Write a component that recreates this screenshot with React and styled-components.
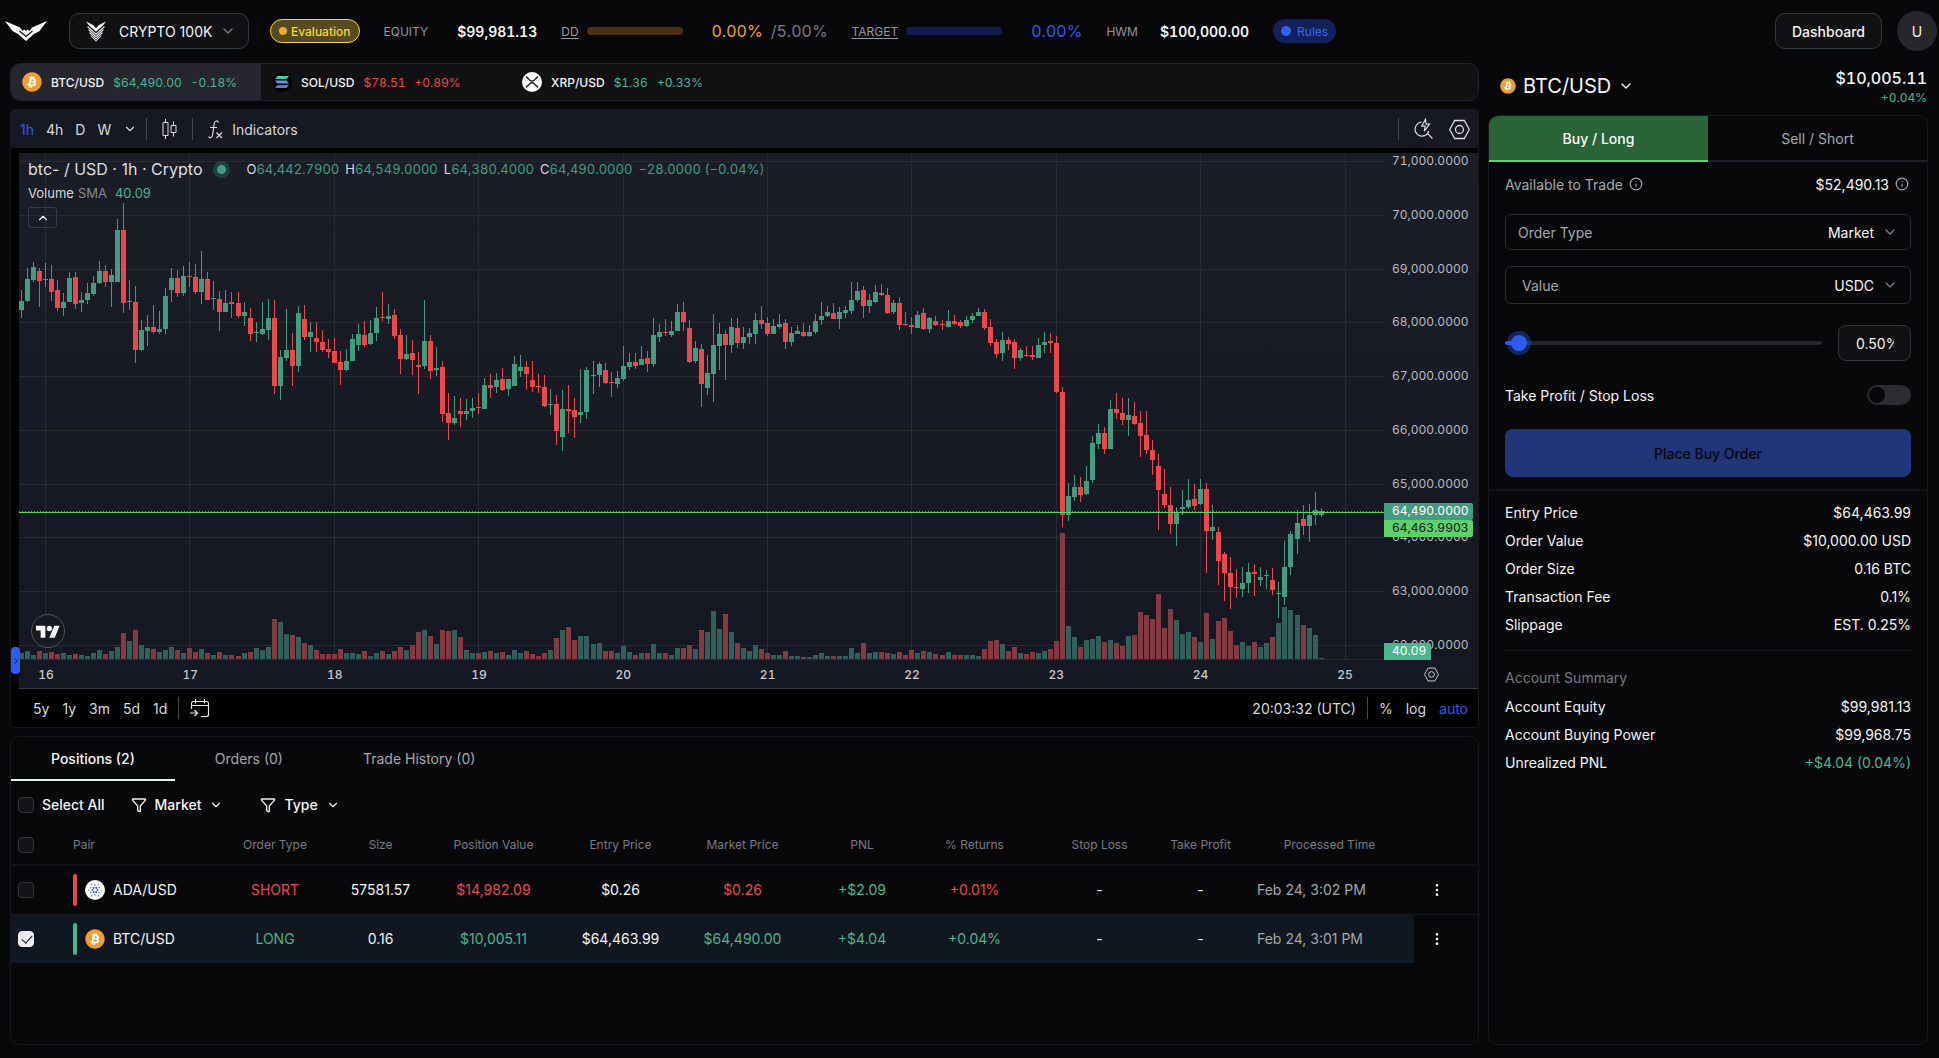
import React from "react";
import styled, { createGlobalStyle, css } from "styled-components";
import {
  ChevronDown,
  ChevronUp,
  ChevronRight,
  EllipsisVertical,
  Funnel,
  Info,
} from "lucide-react";
import { FaBitcoin } from "react-icons/fa";

const colors = {
  page: "#08080a",
  panel: "#111113",
  line: "#17181c",
  lineStrong: "#2a2c33",
  text: "#f4f4f5",
  soft: "#a5a7ad",
  muted: "#777a82",
  blue: "#2f5bea",
  up: "#4bb58f",
  down: "#e9484f",
  candleUp: "#459b80",
  lime: "#5dd26b",
};

const GlobalStyle = createGlobalStyle`
  * {
    box-sizing: border-box;
  }

  body {
    margin: 0;
    background: ${colors.page};
    color: ${colors.text};
    font-family: Inter, "Liberation Sans", sans-serif;
    font-size: 14px;
  }

  button, input, select {
    margin: 0;
    padding: 0;
    border: 0;
    background: none;
    color: inherit;
    font: inherit;
  }

  button, select {
    cursor: pointer;
  }

  select {
    appearance: none;
    outline: none;
  }

  svg {
    display: block;
    flex: none;
  }
`;

/* ---------- chart data ---------- */

// Each bar: [direction, high, body top, body bottom, low, volume].
// Prices are ticks down from the segment's own base line, three to a pixel.
const SEGMENTS = [
  {
    base: -3,
    bars: [
      ["u", 420, 453, 480, 505, 19], ["u", 353, 387, 453, 455, 25], ["u", 336, 351, 390, 396, 13],
      ["d", 355, 363, 392, 471, 24], ["u", 340, 386, 389, 411, 19], ["d", 345, 387, 426, 452, 21],
      ["d", 390, 420, 473, 484, 16], ["u", 430, 456, 473, 498, 19], ["u", 367, 384, 456, 457, 13],
      ["d", 366, 381, 462, 476, 16], ["u", 426, 450, 459, 487, 12], ["u", 399, 429, 450, 462, 10],
      ["u", 378, 399, 432, 437, 19], ["u", 333, 363, 399, 402, 28], ["d", 345, 363, 396, 410, 16],
      ["u", 357, 375, 396, 471, 25], ["u", 207, 240, 396, 396, 36], ["d", 160, 240, 459, 488, 79],
      ["u", 390, 453, 456, 480, 55], ["d", 408, 456, 600, 638, 88], ["u", 511, 541, 600, 604, 43],
      ["u", 495, 531, 543, 587, 33], ["d", 466, 531, 547, 551, 31], ["u", 484, 537, 546, 551, 22],
      ["u", 414, 438, 537, 551, 28], ["u", 353, 384, 420, 456, 36], ["d", 360, 384, 429, 440, 28],
      ["u", 347, 378, 429, 437, 19], ["d", 337, 378, 381, 410, 34], ["d", 342, 381, 426, 431, 22],
      ["u", 303, 387, 426, 461, 31], ["d", 366, 387, 450, 450, 19], ["u", 393, 444, 447, 480, 13],
      ["d", 424, 447, 486, 542, 21], ["u", 420, 459, 486, 486, 12], ["d", 427, 456, 461, 503, 11],
      ["d", 427, 459, 497, 503, 9], ["u", 456, 486, 497, 528, 19], ["d", 475, 504, 552, 573, 22],
      ["u", 517, 546, 549, 575, 34], ["u", 457, 537, 552, 554, 28], ["u", 447, 504, 541, 569, 36],
      ["d", 450, 504, 708, 731, 119], ["u", 599, 621, 708, 749, 110], ["u", 478, 600, 624, 632, 76],
      ["d", 550, 600, 648, 707, 73], ["u", 468, 489, 648, 667, 66], ["d", 465, 507, 560, 569, 49],
      ["u", 516, 545, 560, 607, 43], ["d", 517, 565, 577, 606, 28], ["d", 541, 576, 600, 605, 15],
      ["d", 567, 597, 606, 624, 16], ["d", 565, 603, 639, 640, 16], ["d", 604, 636, 660, 705, 31],
      ["u", 598, 632, 659, 662, 19], ["u", 553, 567, 633, 634, 19], ["u", 523, 552, 586, 604, 16],
      ["d", 514, 555, 584, 590, 25], ["u", 510, 549, 582, 585, 10], ["u", 471, 504, 549, 572, 19],
      ["d", 427, 501, 504, 514, 25], ["u", 462, 499, 507, 522, 16], ["d", 478, 495, 558, 566, 25],
      ["d", 538, 555, 627, 671, 36], ["u", 555, 611, 626, 629, 28], ["d", 571, 609, 630, 675, 42],
      ["d", 607, 645, 651, 731, 82], ["u", 450, 573, 648, 656, 88], ["d", 556, 573, 664, 686, 70],
      ["u", 591, 653, 661, 677, 46], ["d", 633, 652, 792, 815, 88], ["d", 728, 788, 819, 870, 85],
      ["u", 738, 804, 820, 825, 88], ["d", 744, 782, 792, 831, 66], ["u", 747, 783, 793, 809, 28],
      ["u", 743, 773, 783, 803, 19], ["d", 728, 771, 775, 792, 19], ["u", 684, 705, 776, 776, 22],
      ["d", 673, 705, 713, 743, 25], ["u", 668, 689, 711, 728, 19],
    ],
  },
  {
    base: 47,
    bars: [
      ["d", 505, 537, 569, 573, 22], ["u", 536, 537, 567, 587, 13], ["u", 468, 492, 557, 558, 28],
      ["u", 465, 501, 513, 530, 19], ["d", 484, 501, 522, 570, 25], ["d", 484, 540, 561, 575, 16],
      ["d", 522, 558, 561, 578, 10], ["d", 526, 561, 618, 621, 19], ["u", 567, 611, 614, 644, 28],
      ["d", 586, 612, 693, 735, 64], ["u", 569, 626, 711, 753, 88], ["d", 556, 626, 632, 699, 97],
      ["d", 594, 630, 651, 714, 58], ["u", 508, 636, 645, 668, 70], ["u", 502, 510, 636, 657, 70],
      ["u", 484, 525, 529, 582, 46], ["u", 487, 493, 526, 560, 49], ["d", 490, 509, 549, 551, 25],
      ["d", 516, 545, 549, 591, 25], ["u", 512, 534, 551, 563, 19], ["u", 438, 498, 537, 543, 39],
      ["u", 459, 487, 500, 509, 22], ["d", 460, 487, 498, 506, 13], ["u", 438, 476, 494, 494, 19],
      ["d", 453, 474, 492, 516, 19], ["u", 355, 405, 492, 500, 46], ["u", 373, 397, 411, 425, 19],
      ["d", 357, 396, 399, 408, 19], ["u", 363, 393, 405, 410, 13], ["u", 312, 336, 393, 393, 34],
      ["d", 307, 336, 366, 392, 33], ["d", 360, 384, 486, 488, 43], ["u", 423, 445, 482, 488, 31],
      ["d", 433, 447, 552, 620, 88], ["u", 465, 519, 564, 586, 82], ["u", 343, 436, 521, 605, 145],
      ["u", 369, 402, 438, 509, 91], ["d", 390, 403, 434, 539, 136], ["u", 354, 381, 434, 459, 82],
      ["d", 355, 384, 430, 444, 49], ["u", 381, 411, 430, 448, 33], ["u", 384, 400, 411, 431, 25],
      ["u", 340, 360, 402, 431, 43], ["d", 319, 360, 372, 386, 31], ["d", 351, 370, 402, 407, 19],
      ["u", 357, 379, 401, 401, 12], ["u", 343, 372, 381, 386, 12], ["d", 358, 370, 426, 446, 25],
      ["u", 382, 400, 426, 437, 10], ["u", 376, 393, 402, 402, 9], ["d", 370, 396, 407, 410, 7],
      ["u", 376, 395, 408, 410, 7], ["u", 343, 363, 396, 401, 13], ["u", 307, 348, 360, 374, 19],
      ["u", 319, 336, 348, 350, 10], ["d", 310, 339, 357, 358, 10], ["u", 321, 337, 357, 386, 10],
      ["u", 319, 330, 340, 354, 9], ["u", 246, 300, 333, 342, 34], ["u", 246, 273, 300, 306, 19],
      ["d", 259, 270, 318, 355, 49], ["u", 282, 300, 318, 338, 19], ["u", 255, 276, 306, 308, 22],
      ["d", 253, 279, 286, 288, 22], ["d", 264, 285, 338, 341, 19], ["u", 301, 309, 337, 341, 15],
      ["d", 292, 309, 375, 389, 22], ["d", 336, 372, 375, 378, 13], ["d", 351, 375, 382, 403, 28],
      ["u", 334, 345, 383, 384, 19], ["d", 325, 340, 387, 391, 25], ["u", 352, 355, 387, 400, 22],
      ["d", 348, 364, 375, 378, 16], ["d", 360, 372, 375, 391, 13], ["u", 331, 363, 380, 381, 22],
      ["d", 346, 363, 372, 374, 13], ["d", 361, 367, 379, 384, 12], ["u", 349, 361, 379, 380, 12],
      ["u", 340, 349, 360, 368, 12], ["u", 325, 337, 348, 349, 10],
    ],
  },
  {
    base: 107,
    bars: [
      ["d", 148, 156, 204, 210, 31], ["d", 178, 202, 249, 258, 55], ["d", 237, 247, 282, 294, 58],
      ["u", 216, 240, 279, 302, 46], ["d", 230, 240, 252, 270, 25], ["d", 238, 247, 293, 326, 36],
      ["u", 264, 269, 293, 302, 19], ["d", 258, 285, 288, 292, 16], ["d", 258, 286, 291, 299, 22],
      ["u", 235, 255, 294, 294, 19], ["u", 216, 246, 255, 278, 25], ["d", 220, 244, 250, 278, 31],
      ["d", 228, 250, 396, 398, 55], ["d", 380, 396, 766, 800, 378], ["u", 670, 709, 766, 782, 99],
      ["u", 645, 682, 711, 724, 66], ["d", 651, 682, 705, 726, 36], ["u", 618, 663, 703, 705, 57],
      ["u", 528, 549, 661, 669, 60], ["u", 492, 519, 552, 566, 69], ["d", 502, 519, 567, 582, 51],
      ["u", 420, 447, 567, 567, 57], ["d", 399, 447, 459, 477, 48], ["d", 415, 459, 480, 494, 39],
      ["u", 415, 465, 480, 528, 69], ["d", 426, 468, 492, 495, 72], ["d", 452, 489, 528, 591, 141],
      ["d", 454, 525, 570, 581, 132], ["d", 540, 570, 600, 646, 120], ["d", 582, 618, 690, 810, 195],
      ["d", 627, 702, 735, 744, 93], ["d", 681, 734, 791, 822, 150], ["u", 741, 757, 792, 857, 117],
      ["u", 690, 741, 747, 764, 75], ["u", 657, 720, 741, 746, 81], ["d", 672, 717, 738, 751, 66],
      ["u", 657, 687, 732, 734, 51], ["d", 669, 687, 813, 938, 137], ["u", 736, 802, 812, 840, 60],
      ["d", 802, 817, 903, 974, 114], ["d", 877, 883, 939, 1022, 123], ["d", 892, 938, 981, 1047, 84],
      ["d", 927, 981, 984, 1014, 42], ["u", 921, 968, 987, 1010, 51], ["u", 909, 935, 968, 998, 39],
      ["d", 912, 935, 942, 1007, 51], ["u", 921, 950, 960, 978, 36], ["u", 930, 944, 948, 987, 48],
      ["d", 924, 960, 990, 1005, 66], ["u", 965, 999, 1003, 1075, 108], ["u", 843, 920, 1011, 1035, 156],
      ["u", 814, 822, 921, 945, 147], ["u", 750, 789, 838, 882, 132], ["d", 736, 777, 798, 826, 102],
      ["u", 732, 765, 798, 846, 93], ["u", 696, 750, 766, 794, 72], ["u", 744, 752, 764, 771, 3],
    ],
  },
];

const BARS = SEGMENTS.flatMap(({ base, bars }) =>
  bars.map(([dir, high, top, bottom, low, volume]) => ({
    up: dir === "u",
    high: Math.round(base + high / 3),
    top: Math.round(base + top / 3),
    bottom: Math.round(base + bottom / 3),
    low: Math.round(base + low / 3),
    volume: Math.max(1, Math.round(volume / 3)),
  })),
);

const PLOT = { width: 1365, height: 507, step: 6.017, day: 144.4 };
const PRICES = [71, 70, 69, 68, 67, 66, 65, 64, 63, 62];
const DAYS = [16, 17, 18, 19, 20, 21, 22, 23, 24, 25];

/* ---------- table and panel data ---------- */

const tickers = [
  { coin: "btc", pair: "BTC/USD", price: "$64,490.00", change: "-0.18%", tone: "up", active: true },
  { coin: "sol", pair: "SOL/USD", price: "$78.51", change: "+0.89%", tone: "down" },
  { coin: "xrp", pair: "XRP/USD", price: "$1.36", change: "+0.33%", tone: "up" },
];

const columns = [
  { label: "Pair", width: 136 },
  { label: "Order Type", width: 147 },
  { label: "Size", width: 64 },
  { label: "Position Value", width: 162 },
  { label: "Entry Price", width: 92 },
  { label: "Market Price", width: 152 },
  { label: "PNL", width: 87 },
  { label: "% Returns", width: 138 },
  { label: "Stop Loss", width: 112 },
  { label: "Take Profit", width: 90 },
  { label: "Processed Time", width: 168 },
];

const positions = [
  {
    coin: "ada", pair: "ADA/USD", side: "SHORT", tone: "down", size: "57581.57", value: "$14,982.09",
    entry: "$0.26", market: "$0.26", pnl: "+$2.09", returns: "+0.01%", time: "Feb 24, 3:02 PM",
  },
  {
    coin: "btc", pair: "BTC/USD", side: "LONG", tone: "up", size: "0.16", value: "$10,005.11",
    entry: "$64,463.99", market: "$64,490.00", pnl: "+$4.04", returns: "+0.04%", time: "Feb 24, 3:01 PM",
    selected: true,
  },
];

const orderDetails = [
  ["Entry Price", "$64,463.99"],
  ["Order Value", "$10,000.00 USD"],
  ["Order Size", "0.16 BTC"],
  ["Transaction Fee", "0.1%"],
  ["Slippage", "EST. 0.25%"],
];

const accountSummary = [
  ["Account Equity", "$99,981.13"],
  ["Account Buying Power", "$99,968.75"],
  ["Unrealized PNL", "+$4.04 (0.04%)", "up"],
];

/* ---------- icons ---------- */

const BrandMark = () => (
  <svg width="42" height="20" viewBox="0 0 42 20" fill="#fff" aria-label="Home">
    <path d="M0 0 L15 6.500 L17.500 10 L19.500 8.500 L21 10 L22.500 8.500 L24.500 10 L27 6.500 L42 0 L34.500 10 L29 13 L21 20 L13 13 L7.500 10 Z" />
    <path d="M14.500 10 L21 15.500 L27.500 10" fill="none" stroke="#08080a" strokeWidth="1.200" />
  </svg>
);

const AccountMark = () => (
  <svg width="20" height="21" viewBox="0 0 20 21" fill="none" stroke="#d9dadd">
    <path d="M0 .5 L7 4 L10 7 L13 4 L20 .5 L16.500 5 L10 10.500 L3.500 5 Z" fill="#fff" stroke="none" />
    <path d="M1.500 5.500 L10 13.200 L18.500 5.500" strokeWidth="1.300" />
    <path d="M2.500 8.500 L10 15.800 L17.500 8.500" strokeWidth="1.200" />
    <path d="M3.500 11.500 L10 18.200 L16.500 11.500" strokeWidth="1.100" />
    <path d="M5 14.800 L10 20.200 L15 14.800" strokeWidth="1" />
  </svg>
);

const CandlesIcon = () => (
  <svg width="15" height="20" viewBox="0 0 15 20" fill="none" stroke="#d8d9dd">
    <path d="M3.500 0v3.500M3.500 16.500v3.500M1 3.500h5v13H1zM11.500 2.500v4M11.500 13.500v4M9 6.500h5v7H9z" />
  </svg>
);

const FunctionIcon = () => (
  <svg width="15" height="19" viewBox="0 0 15 19" fill="none" stroke="#d8d9dd" strokeWidth="1.200">
    <path d="M10.500 2.500C9.500 .3 6.600 .3 6.200 3.500L4.700 14.500C4.300 17.800 1.800 18.500 .6 16.600M2 7.500h7M8.500 12.500l5.500 5.500M14 12.500l-5.500 5.500" />
  </svg>
);

const QuickSearchIcon = () => (
  <svg width="20" height="22" viewBox="0 0 20 22" fill="none" stroke="#d8d9dd" strokeWidth="1.200">
    <path d="M7.500 4.200A7 7 0 1 0 14.800 13M13.500 15.500l5 5" />
    <path d="M11.500 1.200L7.800 8.200h3.400l-.9 5 5.200-7h-3.400z" />
  </svg>
);

const HexIcon = ({ size = 21 }) => (
  <svg width={size} height={size} viewBox="0 0 21 21" fill="none" stroke="#d8d9dd" strokeWidth="1.300">
    <path d="M5.700 1.500h9.600l5 9-5 9H5.700l-5-9z" />
    <circle cx="10.500" cy="10.500" r="4" />
  </svg>
);

const CalendarIcon = () => (
  <svg width="20" height="19" viewBox="0 0 20 19" fill="none" stroke="#e4e5e8" strokeWidth="1.200">
    <path d="M1.500 10V4.500a2 2 0 0 1 2-2h13a2 2 0 0 1 2 2v11a2 2 0 0 1-2 2H11M1.500 6.500h17M5.500 0v4.500M14.500 0v4.500M0 14h7.500M4.500 11l3 3-3 3" />
  </svg>
);

const ChartBrandIcon = () => (
  <svg width="24" height="19" viewBox="0 0 36 28" fill="#fff">
    <path d="M14 22H7V11H0V4h14v18zM28 22h-8l7.500-18h8L28 22z" />
    <circle cx="20" cy="8" r="4" />
  </svg>
);

const SolGlyph = () => (
  <svg width="14" height="12" viewBox="0 0 14 12">
    <path d="M2.500 0H14L11.500 3H0z" fill="#45c9b4" />
    <path d="M0 4.500H11.500L14 7.500H2.500z" fill="#6f8fe0" />
    <path d="M2.500 9H14L11.500 12H0z" fill="#6d6be0" />
  </svg>
);

const XrpGlyph = () => (
  <svg width="14" height="12" viewBox="0 0 14 12" fill="none" stroke="#222" strokeWidth="1.500">
    <path d="M1 .5L4.800 4.300Q7 6.200 9.200 4.300L13 .5M1 11.500L4.800 7.700Q7 5.800 9.200 7.700L13 11.500" />
  </svg>
);

const AdaGlyph = () => (
  <svg width="16" height="16" viewBox="-8 -8 16 16" fill="#3c55c5">
    {[0, 60, 120, 180, 240, 300].map((angle) => (
      <g key={angle} transform={`rotate(${angle})`}>
        <circle cx="2.500" r="1" />
        <circle cx="4.200" cy="2.400" r=".7" />
        <circle cx="6.600" r=".6" />
      </g>
    ))}
  </svg>
);

function CoinIcon({ coin, size = 20 }) {
  switch (coin) {
    case "sol":
      return <CoinDisc $size={size} $fill="#000"><SolGlyph /></CoinDisc>;
    case "xrp":
      return <CoinDisc $size={size} $fill="#fff"><XrpGlyph /></CoinDisc>;
    case "ada":
      return <CoinDisc $size={size} $fill="#fff"><AdaGlyph /></CoinDisc>;
    default:
      return (
        <CoinDisc $size={size} $fill="radial-gradient(#fff 58%, transparent 60%)">
          <FaBitcoin size={size} color="#eb9f35" />
        </CoinDisc>
      );
  }
}

/* ---------- sections ---------- */

function TopBar() {
  return (
    <Header>
      <BrandMark />
      <AccountPicker>
        <AccountMark />
        <select aria-label="Account" defaultValue="crypto100">
          <option value="crypto100">CRYPTO 100K</option>
        </select>
        <ChevronDown size={16} color={colors.muted} />
      </AccountPicker>
      <Metrics>
        <Badge $tone="gold"><i />Evaluation</Badge>
        <Metric $gap={29}>
          <MetricLabel>EQUITY</MetricLabel>
          <MetricValue>$99,981.13</MetricValue>
        </Metric>
        <Metric $gap={8}>
          <MetricLabel $underline>DD</MetricLabel>
          <Meter $fill="#4a3015" />
        </Metric>
        <Metric $gap={8}>
          <Percent $color="#f0a030">0.00%</Percent>
          <Percent $color="#777a80">/5.00%</Percent>
        </Metric>
        <Metric $gap={8}>
          <MetricLabel $underline>TARGET</MetricLabel>
          <Meter $fill="#131c4d" />
        </Metric>
        <Percent $color={colors.blue}>0.00%</Percent>
        <Metric $gap={22}>
          <MetricLabel>HWM</MetricLabel>
          <MetricValue>$100,000.00</MetricValue>
        </Metric>
        <Badge as="button" $tone="blue"><i />Rules</Badge>
      </Metrics>
      <HeaderActions>
        <DashboardButton>Dashboard</DashboardButton>
        <Avatar aria-label="User menu">U</Avatar>
      </HeaderActions>
    </Header>
  );
}

function TickerStrip() {
  return (
    <Strip>
      {tickers.map((item) => (
        <Ticker key={item.pair} $active={item.active}>
          <CoinIcon coin={item.coin} />
          <span>{item.pair}</span>
          <Tone $tone={item.tone}>{item.price}</Tone>
          <Tone $tone={item.tone}>{item.change}</Tone>
        </Ticker>
      ))}
    </Strip>
  );
}

function Plot() {
  return (
    <PlotSvg viewBox={`0 0 ${PLOT.width} ${PLOT.height}`} preserveAspectRatio="none" shapeRendering="crispEdges">
      {PRICES.map((price, i) => (
        <rect key={price} x="0" y={Math.floor(8.5 + i * 53.78)} width={PLOT.width} height="1" fill="#292b32" />
      ))}
      {DAYS.map((day, i) => (
        <rect key={day} x={Math.floor(26.5 + i * PLOT.day)} y="0" width="1" height={PLOT.height} fill="#292b32" />
      ))}
      {BARS.map((bar, i) => {
        const x = Math.floor(2.4 + i * PLOT.step);
        return (
          <g key={i}>
            <rect
              x={x - 2}
              y={PLOT.height - 1 - bar.volume}
              width="5"
              height={bar.volume}
              fill={bar.up ? "#315f59" : "#833a42"}
            />
            <g fill={bar.up ? colors.candleUp : colors.down}>
              <rect x={x} y={bar.high} width="1" height={bar.low - bar.high} />
              <rect x={x - 2} y={bar.top} width="5" height={Math.max(1, bar.bottom - bar.top)} />
            </g>
          </g>
        );
      })}
      <line x1="0" x2={PLOT.width} y1="358.5" y2="358.5" stroke={colors.candleUp} strokeDasharray="1 2" />
      <line x1="0" x2={PLOT.width} y1="359.5" y2="359.5" stroke={colors.lime} />
      <rect x="0" y={PLOT.height - 1} width={PLOT.width} height="1" fill="#292b32" />
    </PlotSvg>
  );
}

function Chart() {
  return (
    <ChartPanel>
      <ChartToolbar>
        <Intervals>
          <ToolButton $active>1h</ToolButton>
          <ToolButton>4h</ToolButton>
          <ToolButton>D</ToolButton>
          <ToolButton>W</ToolButton>
          <ToolButton aria-label="More intervals"><ChevronDown size={14} /></ToolButton>
        </Intervals>
        <Divider />
        <ToolButton aria-label="Chart type"><CandlesIcon /></ToolButton>
        <Divider />
        <ToolButton><FunctionIcon />Indicators</ToolButton>
        <Spacer />
        <Divider />
        <ToolButton aria-label="Quick search"><QuickSearchIcon /></ToolButton>
        <ToolButton aria-label="Chart settings"><HexIcon /></ToolButton>
      </ChartToolbar>
      <ChartBody>
        <PlotArea>
          <Plot />
          <Legend>
            <LegendRow>
              <h2>btc- / USD · 1h · Crypto</h2>
              <StatusDot />
              <Ohlc>
                <span>O<b>64,442.7900</b></span>
                <span>H<b>64,549.0000</b></span>
                <span>L<b>64,380.4000</b></span>
                <span>C<b>64,490.0000</b></span>
                <b>−28.0000 (−0.04%)</b>
              </Ohlc>
            </LegendRow>
            <VolumeRow>
              Volume <span>SMA</span> <b>40.09</b>
            </VolumeRow>
            <CollapseButton aria-label="Collapse legend"><ChevronUp size={14} /></CollapseButton>
          </Legend>
          <ChartBrand><ChartBrandIcon /></ChartBrand>
        </PlotArea>
        <PriceAxis>
          {PRICES.map((price) => (
            <span key={price}>{price},000.0000</span>
          ))}
          <PriceTags>
            <PriceTag $fill={colors.candleUp}>64,490.0000</PriceTag>
            <PriceTag $fill={colors.lime} $dark>64,463.9903</PriceTag>
          </PriceTags>
          <VolumeTag>40.09</VolumeTag>
        </PriceAxis>
        <TimeAxis>
          {DAYS.map((day) => (
            <span key={day}>{day}</span>
          ))}
        </TimeAxis>
        <AxisCorner aria-label="Scale settings"><HexIcon size={15} /></AxisCorner>
      </ChartBody>
      <RangeBar>
        {["5y", "1y", "3m", "5d", "1d"].map((range) => (
          <ToolButton key={range}>{range}</ToolButton>
        ))}
        <Divider />
        <ToolButton aria-label="Go to date"><CalendarIcon /></ToolButton>
        <Spacer />
        <ToolButton>20:03:32 (UTC)</ToolButton>
        <Divider />
        <ToolButton>%</ToolButton>
        <ToolButton>log</ToolButton>
        <ToolButton $active>auto</ToolButton>
      </RangeBar>
      <DrawingHandle aria-label="Show drawing toolbar"><ChevronRight size={10} /></DrawingHandle>
    </ChartPanel>
  );
}

function Positions() {
  return (
    <PositionsPanel>
      <PositionTabs>
        <PositionTab $active>Positions (2)</PositionTab>
        <PositionTab>Orders (0)</PositionTab>
        <PositionTab>Trade History (0)</PositionTab>
      </PositionTabs>
      <Filters>
        <label>
          <Checkbox />
          Select All
        </label>
        <FilterButton><Funnel size={16} />Market<ChevronDown size={14} /></FilterButton>
        <FilterButton><Funnel size={16} />Type<ChevronDown size={14} /></FilterButton>
      </Filters>
      <Table>
        <colgroup>
          <col width="55" />
          {columns.map((column) => (
            <col key={column.label} width={column.width} />
          ))}
          <col width="66" />
        </colgroup>
        <thead>
          <tr>
            <th><Checkbox aria-label="Select every position" /></th>
            {columns.map((column) => (
              <th key={column.label}>{column.label}</th>
            ))}
            <th aria-label="Actions" />
          </tr>
        </thead>
        <tbody>
          {positions.map((row) => (
            <Row key={row.pair} $selected={row.selected}>
              <td><Checkbox defaultChecked={row.selected} aria-label={`Select ${row.pair}`} /></td>
              <td>
                <PairCell $tone={row.tone}>
                  <i />
                  <CoinIcon coin={row.coin} />
                  {row.pair}
                </PairCell>
              </td>
              <td><Tone $tone={row.tone}>{row.side}</Tone></td>
              <td>{row.size}</td>
              <td><Tone $tone={row.tone}>{row.value}</Tone></td>
              <td>{row.entry}</td>
              <td><Tone $tone={row.tone}>{row.market}</Tone></td>
              <td><Tone $tone="up">{row.pnl}</Tone></td>
              <td><Tone $tone={row.tone}>{row.returns}</Tone></td>
              <td>-</td>
              <td>-</td>
              <TimeCell>{row.time}</TimeCell>
              <ActionCell>
                <button aria-label={`Actions for ${row.pair}`}><EllipsisVertical size={16} /></button>
              </ActionCell>
            </Row>
          ))}
        </tbody>
      </Table>
    </PositionsPanel>
  );
}

function OrderPanel() {
  return (
    <Aside>
      <PairHeader>
        <PairButton>
          <CoinIcon coin="btc" size={16} />
          BTC/USD
          <ChevronDown size={16} />
        </PairButton>
        <PairQuote>
          <strong>$10,005.11</strong>
          <Tone $tone="up">+0.04%</Tone>
        </PairQuote>
      </PairHeader>
      <OrderCard>
        <SideTabs>
          <SideTab $active>Buy / Long</SideTab>
          <SideTab>Sell / Short</SideTab>
        </SideTabs>
        <OrderForm>
          <Available>
            <span>Available to Trade <Info size={14} /></span>
            <strong>$52,490.13 <Info size={14} /></strong>
          </Available>
          <Field $height={36}>
            <label htmlFor="order-type">Order Type</label>
            <select id="order-type" defaultValue="Market">
              <option>Market</option>
            </select>
            <ChevronDown size={16} />
          </Field>
          <Field $height={38}>
            <input type="text" placeholder="Value" aria-label="Value" />
            <select aria-label="Currency" defaultValue="USDC">
              <option>USDC</option>
            </select>
            <ChevronDown size={16} />
          </Field>
          <SizeRow>
            <Slider aria-label="Order size" min="0" max="25" step="0.5" defaultValue="0.5" />
            <SizeInput aria-label="Order size percent" defaultValue="0.50%" />
          </SizeRow>
          <SwitchRow>
            Take Profit / Stop Loss
            <Switch />
          </SwitchRow>
          <SubmitButton>Place Buy Order</SubmitButton>
        </OrderForm>
        <Details>
          {orderDetails.map(([label, value]) => (
            <DetailRow key={label}><dt>{label}</dt><dd>{value}</dd></DetailRow>
          ))}
        </Details>
        <Summary>
          <h3>Account Summary</h3>
          <dl>
            {accountSummary.map(([label, value, tone]) => (
              <DetailRow key={label}>
                <dt>{label}</dt>
                <dd><Tone $tone={tone}>{value}</Tone></dd>
              </DetailRow>
            ))}
          </dl>
        </Summary>
      </OrderCard>
    </Aside>
  );
}

function App() {
  return (
    <Page>
      <GlobalStyle />
      <TopBar />
      <Workspace>
        <MainColumn>
          <TickerStrip />
          <Chart />
          <Positions />
        </MainColumn>
        <OrderPanel />
      </Workspace>
    </Page>
  );
}

/* ---------- styles ---------- */

const Page = styled.div`
  min-height: 100vh;
  display: flex;
  flex-direction: column;
`;

const Tone = styled.span`
  color: ${({ $tone }) => ($tone ? colors[$tone] : "inherit")};
`;

const Spacer = styled.div`
  flex: 1;
`;

const CoinDisc = styled.span`
  display: inline-flex;
  align-items: center;
  justify-content: center;
  flex: none;
  width: ${({ $size }) => $size}px;
  height: ${({ $size }) => $size}px;
  border-radius: 50%;
  background: ${({ $fill }) => $fill};
`;

const Header = styled.header`
  display: flex;
  align-items: center;
  height: 63px;
  padding: 0 2px 1px 5px;
`;

const AccountPicker = styled.div`
  display: flex;
  align-items: center;
  gap: 13px;
  height: 36px;
  margin: 0 8px 0 22px;
  padding: 0 12px 0 16px;
  border: 1px solid #343a3e;
  border-radius: 10px;
  background: ${colors.panel};

  svg:last-child {
    margin-left: -6px;
  }
`;

const Metrics = styled.div`
  display: flex;
  align-items: center;
  gap: 24px;
  height: 40px;
  padding: 0 12px;
  border-radius: 10px;
  border-left: 1px solid #0e0e11;
  font-variant-numeric: tabular-nums;
  white-space: nowrap;
`;

const Badge = styled.span`
  display: flex;
  align-items: center;
  gap: 4px;
  height: 24px;
  padding: 0 8px;
  border-radius: 12px;
  font-size: 12px;
  font-weight: 500;

  i {
    width: 8px;
    height: 8px;
    border-radius: 50%;
  }

  ${({ $tone }) =>
    $tone === "gold"
      ? css`
          border: 1px solid #f3d733;
          background: #574a1c;
          color: #f5da3a;

          i {
            background: #eba63a;
          }
        `
      : css`
          gap: 6px;
          background: #14205a;
          color: #3a63ee;
          font-weight: 400;

          i {
            background: #3460f0;
            width: 10px;
            height: 10px;
          }
        `}
`;

const Metric = styled.div`
  display: flex;
  align-items: center;
  gap: ${({ $gap }) => $gap}px;
`;

const MetricLabel = styled.span`
  color: #94979e;
  font-size: 12px;
  text-decoration: ${({ $underline }) => ($underline ? "underline" : "none")};
  text-underline-offset: 2px;
`;

const MetricValue = styled.strong`
  font-size: 14px;
  font-weight: 600;
`;

const Meter = styled.span`
  width: 96px;
  height: 8px;
  margin-right: 5px;
  border-radius: 4px;
  background: ${({ $fill }) => $fill};
`;

const Percent = styled.span`
  color: ${({ $color }) => $color};
  font-size: 16px;
`;

const HeaderActions = styled.div`
  display: flex;
  align-items: center;
  gap: 15px;
  margin-left: auto;
`;

const DashboardButton = styled.button`
  height: 36px;
  padding: 0 16px;
  border: 1px solid #343a3e;
  border-radius: 10px;
  background: ${colors.panel};
  font-weight: 500;
`;

const Avatar = styled.button`
  width: 40px;
  height: 40px;
  border-radius: 50%;
  background: #26262c;
`;

const Workspace = styled.div`
  flex: 1;
  display: grid;
  grid-template-columns: minmax(0, 1fr) 440px;
  gap: 9px;
  padding: 0 11px 13px 10px;
`;

const MainColumn = styled.main`
  display: flex;
  flex-direction: column;
  gap: 8px;
`;

const Strip = styled.nav`
  display: flex;
  height: 38px;
  overflow: hidden;
  border: 1px solid #1f2028;
  border-radius: 10px;
  background: ${colors.panel};
`;

const Ticker = styled.button`
  display: flex;
  align-items: center;
  gap: 9px;
  width: 250px;
  padding: 0 11px;
  background: ${({ $active }) => ($active ? "#25262e" : "transparent")};
  font-size: 12px;
  font-variant-numeric: tabular-nums;

  > span:nth-child(2) {
    font-weight: 500;
  }
`;

const ChartPanel = styled.section`
  position: relative;
  overflow: hidden;
  border: 1px solid ${colors.line};
  border-radius: 4px;
  background: #000;
`;

const ChartToolbar = styled.div`
  display: flex;
  align-items: center;
  gap: 15px;
  height: 38px;
  padding: 0 8px;
  background: #171922;
`;

const Intervals = styled.div`
  display: flex;
  gap: 12px;
  margin: 0 -6px 0 1px;
`;

const ToolButton = styled.button`
  display: flex;
  align-items: center;
  gap: 9px;
  color: ${({ $active }) => ($active ? colors.blue : "#d8d9dd")};
  white-space: nowrap;
`;

const Divider = styled.span`
  width: 1px;
  height: 22px;
  background: #454851;
`;

const ChartBody = styled.div`
  display: grid;
  grid-template-columns: minmax(0, 1fr) 94px;
  grid-template-rows: 507px 28px;
  margin: 5px 0 0 8px;
  border-bottom: 1px solid #34363e;
  background: linear-gradient(#1a1c26, #151822);
`;

const PlotArea = styled.div`
  position: relative;
`;

const PlotSvg = styled.svg`
  width: 100%;
  height: 507px;
`;

const Legend = styled.div`
  position: absolute;
  top: 6px;
  left: 9px;
`;

const LegendRow = styled.div`
  display: flex;
  align-items: center;
  height: 20px;

  h2 {
    margin: 0;
    color: #dddee2;
    font-size: 16px;
    font-weight: 400;
  }
`;

const StatusDot = styled.span`
  width: 17px;
  height: 17px;
  margin: 0 16px 0 11px;
  border: 4px solid #223f3e;
  border-radius: 50%;
  background: ${colors.candleUp};
`;

const Ohlc = styled.div`
  display: flex;
  gap: 6px;
  color: #d8d9dd;
  font-size: 13px;
  font-variant-numeric: tabular-nums;

  b {
    color: ${colors.candleUp};
    font-weight: 400;
  }
`;

const VolumeRow = styled.div`
  display: flex;
  align-items: center;
  gap: 4px;
  height: 28px;
  color: #d8d9dd;
  font-size: 13px;

  span {
    color: #85878e;
  }

  b {
    margin-left: 4px;
    color: ${colors.up};
    font-weight: 400;
  }
`;

const CollapseButton = styled.button`
  display: flex;
  align-items: center;
  justify-content: center;
  width: 29px;
  height: 21px;
  border: 1px solid #3a3c44;
  border-radius: 3px;
`;

const ChartBrand = styled.div`
  position: absolute;
  bottom: 12px;
  left: 12px;
  display: flex;
  align-items: center;
  justify-content: center;
  width: 34px;
  height: 34px;
  padding-top: 2px;
  border: 1px solid #50525a;
  border-radius: 50%;
  background: #171922;
`;

const PriceAxis = styled.div`
  position: relative;
  display: flex;
  flex-direction: column;
  justify-content: space-between;
  padding: 0 0 7px 8px;
  color: #b9bbc1;
  font-size: 12px;
  font-variant-numeric: tabular-nums;
  line-height: 16px;
`;

const PriceTags = styled.div`
  position: absolute;
  top: 350px;
  left: 0;
`;

const PriceTag = styled.div`
  height: 17px;
  width: 89px;
  padding-left: 8px;
  border-radius: 0 2px 2px 0;
  background: ${({ $fill }) => $fill};
  color: ${({ $dark }) => ($dark ? "#0b130d" : "#fff")};
`;

const VolumeTag = styled.div`
  position: absolute;
  bottom: 0;
  left: 0;
  height: 17px;
  width: 47px;
  padding-left: 8px;
  border-radius: 0 2px 0 0;
  background: ${colors.up};
  color: #fff;
`;

const TimeAxis = styled.div`
  display: flex;
  align-items: center;
  justify-content: space-between;
  padding: 0 27px 0 15px;
  color: #c9cacf;
  font-size: 12px;
  font-weight: 500;
  font-variant-numeric: tabular-nums;

  span {
    width: 24px;
    text-align: center;
  }
`;

const AxisCorner = styled.button`
  display: flex;
  align-items: center;
  justify-content: center;
`;

const RangeBar = styled.div`
  display: flex;
  align-items: center;
  gap: 13px;
  height: 38px;
  padding: 0 10px 0 22px;

  ${Divider} {
    margin: 0 -2px;
  }
`;

const DrawingHandle = styled.button`
  position: absolute;
  bottom: 53px;
  left: 0;
  display: flex;
  align-items: center;
  justify-content: center;
  width: 9px;
  height: 27px;
  border-radius: 4px;
  background: #2f5bf0;
  color: #0b1020;
`;

const PositionsPanel = styled.section`
  flex: 1;
  border: 1px solid ${colors.line};
  border-radius: 10px;
`;

const PositionTabs = styled.div`
  display: flex;
  height: 44px;
`;

const PositionTab = styled.button`
  padding: 0 40px;
  border-bottom: 2px solid ${({ $active }) => ($active ? "#e8f0ee" : "transparent")};
  color: ${({ $active }) => ($active ? colors.text : colors.soft)};
  font-weight: ${({ $active }) => ($active ? 500 : 400)};
`;

const Filters = styled.div`
  display: flex;
  align-items: center;
  height: 47px;
  padding-left: 7px;
  font-weight: 500;

  label {
    display: flex;
    align-items: center;
    gap: 8px;
    margin-right: 26px;
  }
`;

const FilterButton = styled.button`
  display: flex;
  align-items: center;
  gap: 8px;
  margin-right: 37px;
`;

const Checkbox = styled.input.attrs({ type: "checkbox" })`
  appearance: none;
  display: block;
  width: 16px;
  height: 16px;
  border: 1px solid #34363c;
  border-radius: 4px;
  background: #131316;

  &:checked {
    border-color: #ececee;
    background: #ececee;
  }

  &:checked::before {
    content: "";
    display: block;
    width: 5px;
    height: 9px;
    margin: 1px 0 0 5px;
    border: solid #18181b;
    border-width: 0 1px 1px 0;
    transform: rotate(42deg);
  }
`;

const Table = styled.table`
  width: 100%;
  table-layout: fixed;
  border-collapse: collapse;
  white-space: nowrap;

  th,
  td {
    padding: 0 1px 0 0;
    text-align: center;
  }

  th {
    height: 37px;
    padding-bottom: 3px;
    border-bottom: 2px solid #111215;
    color: ${colors.muted};
    font-size: 12px;
    font-weight: 400;
  }

  th:nth-child(-n + 2),
  td:nth-child(-n + 2) {
    padding-left: 7px;
    text-align: left;
  }
`;

const Row = styled.tr`
  height: 49px;

  & + & {
    border-top: 1px solid #17191e;
  }

  td:not(:last-child) {
    background: ${({ $selected }) => ($selected ? "#111720" : "transparent")};
  }
`;

const PairCell = styled.div`
  display: flex;
  align-items: center;
  gap: 8px;

  i {
    width: 4px;
    height: 32px;
    border-radius: 2px;
    background: ${({ $tone }) => colors[$tone]};
  }
`;

const TimeCell = styled.td`
  && {
    padding-left: 11px;
    color: #a3a5aa;
    text-align: left;
  }
`;

const ActionCell = styled.td`
  && {
    padding-left: 15px;
    text-align: left;
  }

  button {
    display: block;
  }
`;

const Aside = styled.aside`
  display: flex;
  flex-direction: column;
`;

const PairHeader = styled.div`
  display: flex;
  align-items: center;
  justify-content: space-between;
  height: 52px;
  padding: 0 1px 0 12px;
`;

const PairButton = styled.button`
  display: flex;
  align-items: center;
  gap: 7px;
  padding-bottom: 7px;
  font-size: 20px;
`;

const PairQuote = styled.div`
  display: flex;
  flex-direction: column;
  align-items: flex-end;
  padding-bottom: 3px;
  font-size: 12px;
  font-variant-numeric: tabular-nums;
  line-height: 20px;

  strong {
    font-size: 16px;
    font-weight: 500;
  }
`;

const OrderCard = styled.section`
  flex: 1;
  overflow: hidden;
  border: 1px solid ${colors.line};
  border-radius: 10px;
`;

const SideTabs = styled.div`
  display: grid;
  grid-template-columns: 1fr 1fr;
  height: 46px;
`;

const SideTab = styled.button`
  border-bottom: 2px solid ${({ $active }) => ($active ? colors.lime : "#1c1f28")};
  background: ${({ $active }) => ($active ? "#296337" : "transparent")};
  color: ${({ $active }) => ($active ? "#fff" : colors.soft)};
  font-weight: ${({ $active }) => ($active ? 500 : 400)};
`;

const OrderForm = styled.div`
  display: flex;
  flex-direction: column;
  gap: 16px;
  padding: 8px 16px 12px;
  border-bottom: 2px solid #131418;
`;

const Available = styled.div`
  display: flex;
  justify-content: space-between;
  height: 28px;
  color: ${colors.soft};

  span,
  strong {
    display: flex;
    align-items: center;
    gap: 6px;
  }

  strong {
    padding-right: 2px;
    color: ${colors.text};
    font-weight: 400;
  }

  strong svg {
    color: ${colors.soft};
  }
`;

const Field = styled.div`
  display: flex;
  align-items: center;
  gap: 8px;
  height: ${({ $height }) => $height}px;
  padding: 0 12px;
  border: 1px solid ${colors.lineStrong};
  border-radius: 6px;
  color: ${colors.muted};

  label {
    flex: 1;
    color: ${colors.soft};
  }

  input {
    flex: 1;
    min-width: 0;
    padding-left: 4px;
    color: ${colors.text};
  }

  input::placeholder {
    color: ${colors.soft};
  }

  select {
    color: ${colors.text};
    text-align-last: right;
  }
`;

const SizeRow = styled.div`
  display: flex;
  align-items: center;
  gap: 16px;
  margin-top: 5px;
`;

const Slider = styled.input.attrs({ type: "range" })`
  appearance: none;
  flex: 1;
  min-width: 0;
  height: 4px;
  border-radius: 2px;
  background: linear-gradient(to right, #2f5bf0 4%, #24262e 4%);

  &::-webkit-slider-thumb {
    appearance: none;
    width: 16px;
    height: 16px;
    border-radius: 50%;
    background: #2f5bf0;
    box-shadow: 0 0 0 4px rgba(47, 91, 240, 0.35);
  }
`;

const SizeInput = styled.input.attrs({ type: "text" })`
  width: 73px;
  height: 36px;
  padding: 0 16px 0 17px;
  border: 1px solid #33353b;
  border-radius: 8px;
  background: ${colors.panel};
`;

const SwitchRow = styled.label`
  display: flex;
  align-items: center;
  justify-content: space-between;
  height: 36px;
`;

const Switch = styled.input.attrs({ type: "checkbox", role: "switch" })`
  appearance: none;
  width: 44px;
  height: 20px;
  padding: 2px;
  border-radius: 10px;
  background: #2b2b30;

  &::before {
    content: "";
    display: block;
    width: 16px;
    height: 16px;
    border-radius: 50%;
    background: ${colors.page};
  }
`;

const SubmitButton = styled.button`
  height: 48px;
  border-radius: 8px;
  background: #213578;
  color: #07080c;
  font-weight: 500;
`;

const Details = styled.dl`
  margin: 0 16px;
  padding: 7px 0 12px;
  border-bottom: 1px solid ${colors.line};
`;

const DetailRow = styled.div`
  display: flex;
  align-items: center;
  justify-content: space-between;
  height: 28px;

  dd {
    margin: 0;
  }
`;

const Summary = styled.div`
  padding: 13px 16px;

  h3 {
    margin: 0;
    color: ${colors.muted};
    font-size: 14px;
    font-weight: 400;
    line-height: 28px;
  }

  dl {
    margin: 0;
  }
`;

export default App;
